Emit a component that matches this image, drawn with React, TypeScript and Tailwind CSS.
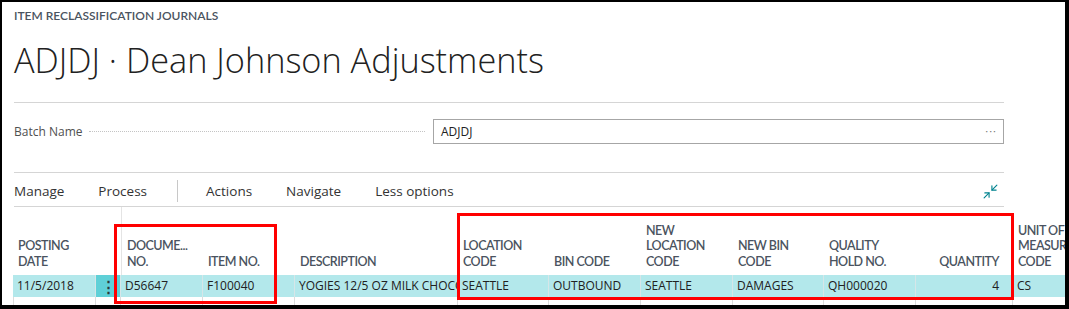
import { Minimize2 } from 'lucide-react'

const segoe = { fontFamily: '"Open Sans", "Noto Sans", sans-serif' }
const din = { fontFamily: 'Lato, "Liberation Sans", sans-serif' }

interface Column {
  key: string
  header: string[]
  width: number
  value: string
  right?: boolean
}

const columns: Column[] = [
  { key: 'date', header: ['Posting', 'Date'], width: 83, value: '11/5/2018' },
  { key: 'menu', header: [], width: 25, value: '' },
  { key: 'doc', header: ['Docume...', 'No.'], width: 82, value: 'D56647' },
  { key: 'item', header: ['Item No.'], width: 92, value: 'F100040' },
  { key: 'desc', header: ['Description'], width: 163, value: 'YOGIES 12/5 OZ MILK CHOCOLATE COVERED RAISINS' },
  { key: 'loc', header: ['Location', 'Code'], width: 91, value: 'SEATTLE' },
  { key: 'bin', header: ['Bin Code'], width: 92, value: 'OUTBOUND' },
  { key: 'newloc', header: ['New', 'Location', 'Code'], width: 92, value: 'SEATTLE' },
  { key: 'newbin', header: ['New Bin', 'Code'], width: 91, value: 'DAMAGES' },
  { key: 'hold', header: ['Quality', 'Hold No.'], width: 92, value: 'QH000020' },
  { key: 'qty', header: ['Quantity'], width: 97, value: '4', right: true },
  { key: 'uom', header: ['Unit of', 'Measure', 'Code'], width: 100, value: 'CS' },
]

function TableHeader() {
  return (
    <div className="flex h-[68px]">
      {columns.map((col) => (
        <div
          key={col.key}
          className={`flex shrink-0 flex-col justify-end overflow-hidden whitespace-nowrap pb-[6px] text-[12.5px] font-semibold uppercase leading-[15.5px] tracking-[-0.5px] text-[#4a5360] ${
            col.right ? 'items-end pr-[14px]' : 'pl-[5px]'
          } ${col.key === 'doc' ? 'border-l border-[#e4e4e4]' : ''}`}
          style={{ ...din, width: col.width }}
        >
          {col.header.map((line) => (
            <span key={line}>{line}</span>
          ))}
        </div>
      ))}
    </div>
  )
}

function DataRow() {
  return (
    <div className="flex h-[22px] bg-[#b3e8eb]">
      {columns.map((col) =>
        col.key === 'menu' ? (
          <div
            key={col.key}
            className="flex shrink-0 items-center justify-center border-r border-[#d6e6e8] bg-[#5fd0d7] text-[15px] font-bold leading-none text-[#2b3a3c]"
            style={{ width: col.width }}
          >
            ⋮
          </div>
        ) : (
          <div
            key={col.key}
            className={`flex shrink-0 items-center overflow-hidden whitespace-nowrap border-r border-[#d6e6e8] text-[12px] text-[#212121] ${
              col.right ? 'justify-end pr-[13px]' : 'pl-[4px]'
            }`}
            style={{ ...segoe, width: col.width }}
          >
            {col.value}
          </div>
        )
      )}
    </div>
  )
}

function EmptyRow() {
  return (
    <div className="flex h-[8px]">
      {columns.map((col, i) => (
        <div
          key={col.key}
          className={`shrink-0 border-r border-[#dcdcdc] ${i === 0 ? 'border-l' : ''}`}
          style={{ width: col.width }}
        />
      ))}
    </div>
  )
}

export default function App() {
  return (
    <div className="relative h-[309px] w-[1069px] overflow-hidden border-b-[4px] border-l-2 border-r-[4px] border-t-2 border-black bg-white">
      <div className="w-[1002px] pl-[12px]">
        <div className="flex h-[28px] items-center text-[12px] font-semibold text-[#4a5360]" style={din}>
          ITEM RECLASSIFICATION JOURNALS
        </div>
        <div className="flex h-[60px] items-center text-[34.3px] font-light text-[#212121]" style={segoe}>
          ADJDJ · Dean Johnson Adjustments
        </div>
        <div className="h-[13px] border-b border-[#d5d5d5]" />

        <div className="flex items-center pt-[16px] pb-[28px]" style={segoe}>
          <span className="text-[12px] text-[#505050]">Batch Name</span>
          <div className="ml-[7px] mr-[8px] h-0 flex-1 border-b border-dotted border-[#c4c4c4]" />
          <div className="flex h-[25px] w-[571px] items-center justify-between border border-[#a6a6a6] pl-[7px] pr-[6px]">
            <span className="text-[12px] text-[#212121]">ADJDJ</span>
            <span className="text-[11px] tracking-[1px] text-[#777]">···</span>
          </div>
        </div>

        <div className="flex h-[35px] items-center border-y border-[#d5d5d5] pt-[3px] text-[13.5px] text-[#333]" style={segoe}>
          <div className="flex items-center gap-[34px]">
            <span>Manage</span>
            <span>Process</span>
          </div>
          <div className="ml-[30px] mr-[28px] h-[22px] w-px bg-[#c8c8c8]" />
          <div className="flex items-center gap-[34px]">
            <span>Actions</span>
            <span>Navigate</span>
            <span>Less options</span>
          </div>
          <div className="ml-auto pr-[5px] text-[#00838f]">
            <Minimize2 size={17} strokeWidth={1.6} />
          </div>
        </div>
      </div>

      <div className="ml-[11px] w-max">
        <TableHeader />
        <DataRow />
        <EmptyRow />
      </div>

      <div className="absolute left-[112px] top-[222px] h-[80px] w-[163px] border-[3px] border-[#ff0000]" />
      <div className="absolute left-[455px] top-[211px] h-[87px] w-[557px] border-[3px] border-[#ff0000]" />
    </div>
  )
}
